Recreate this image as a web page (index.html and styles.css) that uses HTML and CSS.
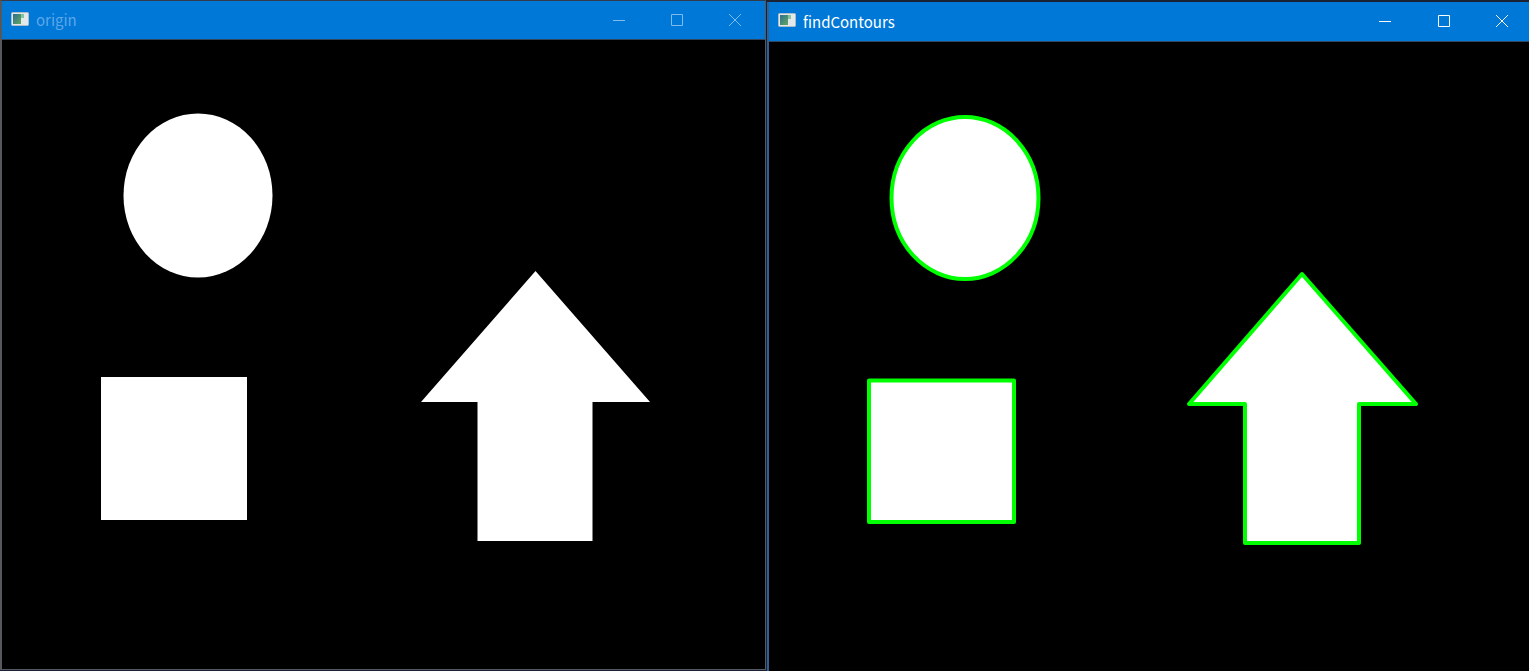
FILE: index.html
```html
<!DOCTYPE html>
<html lang="en">
<head>
    <meta charset="UTF-8">
    <meta name="viewport" content="width=device-width, initial-scale=1.0">
    <title>findContours</title>
    <link rel="stylesheet" href="styles.css">
</head>
<body>
    <div class="desktop">
        <div class="window window-origin">
            <div class="titlebar">
                <svg class="app-icon" viewBox="0 0 18 14">
                    <defs>
                        <linearGradient id="icon-fill-a" x1="0" y1="0" x2="1" y2="1">
                            <stop offset="0" stop-color="#2f6f8f"/>
                            <stop offset="1" stop-color="#62a860"/>
                        </linearGradient>
                    </defs>
                    <rect x="0.5" y="0.5" width="17" height="13" rx="1" fill="#e4e8ea" stroke="#aebcc6"/>
                    <rect x="2" y="2" width="8" height="10" fill="url(#icon-fill-a)"/>
                    <rect x="10" y="2" width="3" height="4" fill="#7fc79a"/>
                </svg>
                <span class="win-title">origin</span>
                <div class="win-controls">
                    <svg class="ctrl ctrl-min" viewBox="0 0 12 12"><path d="M0 6.5H12"/></svg>
                    <svg class="ctrl ctrl-max" viewBox="0 0 12 12"><path d="M.5.5H11.5V11.5H.5Z"/></svg>
                    <svg class="ctrl ctrl-close" viewBox="0 0 12 12"><path d="M0 0L12 12M12 0L0 12"/></svg>
                </div>
            </div>
            <svg class="canvas" viewBox="0 0 763 629">
                <ellipse class="shape" cx="196" cy="155.5" rx="74.5" ry="82"/>
                <rect class="shape" x="99" y="337" width="146" height="143"/>
                <path class="shape" d="M533.5 231L648 362H590.5V501H475.5V362H419Z"/>
            </svg>
        </div>
        <div class="window window-contours">
            <div class="titlebar">
                <svg class="app-icon" viewBox="0 0 18 14">
                    <defs>
                        <linearGradient id="icon-fill-b" x1="0" y1="0" x2="1" y2="1">
                            <stop offset="0" stop-color="#2f6f8f"/>
                            <stop offset="1" stop-color="#62a860"/>
                        </linearGradient>
                    </defs>
                    <rect x="0.5" y="0.5" width="17" height="13" rx="1" fill="#e4e8ea" stroke="#aebcc6"/>
                    <rect x="2" y="2" width="8" height="10" fill="url(#icon-fill-b)"/>
                    <rect x="10" y="2" width="3" height="4" fill="#7fc79a"/>
                </svg>
                <span class="win-title">findContours</span>
                <div class="win-controls">
                    <svg class="ctrl ctrl-min" viewBox="0 0 12 12"><path d="M0 6.5H12"/></svg>
                    <svg class="ctrl ctrl-max" viewBox="0 0 12 12"><path d="M.5.5H11.5V11.5H.5Z"/></svg>
                    <svg class="ctrl ctrl-close" viewBox="0 0 12 12"><path d="M0 0L12 12M12 0L0 12"/></svg>
                </div>
            </div>
            <svg class="canvas" viewBox="0 0 760 629">
                <ellipse class="shape contour" cx="196" cy="156" rx="73.5" ry="81"/>
                <rect class="shape contour" x="100" y="338.5" width="145" height="141.5"/>
                <path class="shape contour" d="M533 232L647 362H590V501H476V362H420Z"/>
            </svg>
        </div>
    </div>
</body>
</html>
```

FILE: styles.css
```css
:root {
    --title-blue: #0078d7;
    --frame-color: #55585c;
}
html, body {
    margin: 0;
    height: 100%;
    overflow: hidden;
    background-color: #1a2233;
}
.desktop {
    display: flex;
    align-items: flex-start;
    width: 1529px;
    height: 671px;
}
.window {
    display: flex;
    flex-direction: column;
    box-sizing: border-box;
    background-color: #000;
}
.window-origin {
    width: 766px;
    height: 670px;
    border: 1px solid var(--frame-color);
    border-top-color: #333c4a;
    border-left-width: 2px;
}
.window-origin .win-title {
    color: #5ea6e8;
}
.window-origin .ctrl {
    opacity: 0.5;
}
.window-origin .win-controls {
    gap: 46px;
    padding-right: 24px;
}
.window-contours {
    width: 762px;
    height: 669px;
    margin-top: 2px;
    margin-left: 1px;
    border-left: 2px solid #2f5f94;
}
.titlebar {
    display: flex;
    align-items: center;
    flex: none;
    background-color: var(--title-blue);
    border-bottom: 1px solid #33485f;
    box-sizing: border-box;
    padding-left: 9px;
    padding-bottom: 1px;
}
.window-origin .titlebar {
    height: 39px;
}
.window-contours .titlebar {
    height: 40px;
}
.app-icon {
    width: 18px;
    height: 14px;
    margin-right: 7px;
    margin-top: -2px;
}
.win-title {
    font-family: "Noto Sans CJK JP", "Noto Sans", sans-serif;
    font-size: 15px;
    color: #fff;
}
.win-controls {
    display: flex;
    align-items: center;
    gap: 46.5px;
    margin-left: auto;
    padding-right: 21px;
}
.ctrl {
    width: 12px;
    height: 12px;
    fill: none;
    stroke: #fff;
    stroke-width: 1;
}
.canvas {
    display: block;
    flex: 1;
    width: 100%;
    min-height: 0;
}
.shape {
    fill: #fff;
}
.contour {
    stroke: #00ff00;
    stroke-width: 4;
    stroke-linejoin: round;
}
```
